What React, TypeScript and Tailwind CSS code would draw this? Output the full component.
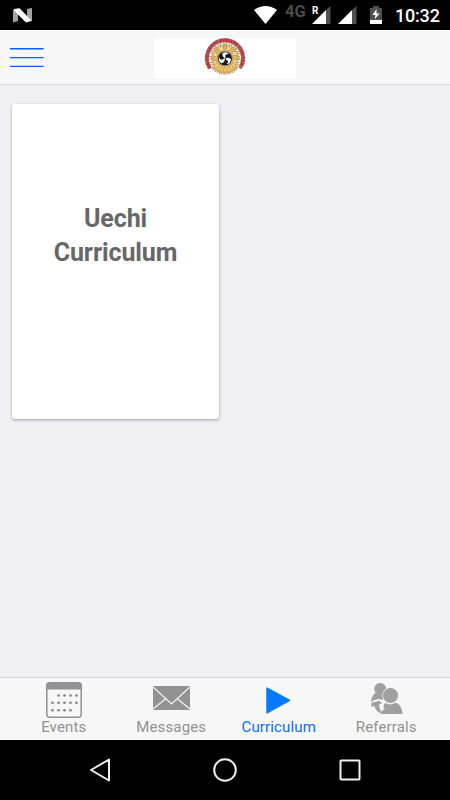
import type { ReactNode } from 'react';
import clsx from 'clsx';

const calendarDots = [
  [13, 13.7], [19, 13.7], [25, 13.7], [31, 13.7],
  [7, 21], [13, 21], [19, 21], [25, 21], [31, 21],
  [7, 28.5], [13, 28.5], [19, 28.5], [25, 28.5],
];

function CalendarIcon() {
  return (
    <svg width="36" height="36" viewBox="0 0 36 36">
      <rect x="0.8" y="0.8" width="34.4" height="34.4" rx="3" fill="none" stroke="#929292" strokeWidth="1.5" />
      <path d="M0.5 7.5V3Q0.5 .5 3 .5H33Q35.5 .5 35.5 3V7.5Z" fill="#929292" />
      {calendarDots.map(([x, y]) => (
        <circle key={`${x}-${y}`} cx={x - 0.5} cy={y - 0.2} r="1.3" fill="#808080" />
      ))}
    </svg>
  );
}

function MailIcon() {
  return (
    <svg className="mb-[3px]" width="37" height="24" viewBox="0 0 37 24">
      <rect width="37" height="24" fill="#929292" />
      <path d="M0 1L18.5 18L37 1M0 23L13 12.5M37 23L24 12.5" fill="none" stroke="#f7f7f7" strokeWidth="1.2" />
    </svg>
  );
}

function PlayIcon() {
  return (
    <svg className="mt-px" width="25" height="27" viewBox="0 0 25 27">
      <path d="M1 1L23.6 13.3L1 26Z" fill="#007aff" stroke="#007aff" strokeWidth="1.4" strokeLinejoin="round" />
    </svg>
  );
}

function PeopleIcon() {
  return (
    <svg className="mb-px" width="33" height="32" viewBox="0 0 33 32" fill="#a0a0a0">
      <circle cx="10.2" cy="6" r="6" />
      <path d="M5 10Q1.5 13.5 .8 19L4.5 17L9 16L13 17V11Z" />
      <path d="M1.5 19.8L9.5 17.8L12 20.5L9.2 21.2Q9 25 12 30.8Q5.5 28.5 4.5 23.3L1.2 23.8Z" />
      <circle cx="20.5" cy="12.5" r="8.3" fill="#f7f7f7" />
      <circle cx="20.5" cy="12.5" r="7.6" />
      <path d="M11 31Q11 23 15.5 20Q20.5 23 25.5 19.5Q32 21.5 32.5 31Z" />
      <path d="M14 20L10 24.5L12.2 25L11 29L14.8 25.5L13.5 24.8Z" fill="#f7f7f7" />
    </svg>
  );
}

const tabs: { label: string; icon: ReactNode; active?: boolean }[] = [
  { label: 'Events', icon: <CalendarIcon /> },
  { label: 'Messages', icon: <MailIcon /> },
  { label: 'Curriculum', icon: <PlayIcon />, active: true },
  { label: 'Referrals', icon: <PeopleIcon /> },
];

function SignalIcon() {
  return (
    <svg width="19" height="18" viewBox="0 0 19 18">
      <path d="M14 4L18.5 0V18H14Z" fill="#505050" />
      <path d="M0 18L14 4V18Z" fill="#fff" />
    </svg>
  );
}

function StatusBar() {
  return (
    <div className="flex h-[30px] shrink-0 items-center bg-black pl-[13px] pr-[9px] text-white">
      <svg width="19" height="15" viewBox="0 0 19 15">
        <path d="M0 2L5 1V13L0 14.5ZM14 1L19 0V13L14 14Z" fill="#a3a3a3" />
        <path d="M1 1L6.5 .2L18.5 12.5L13 14.5L1 2.5Z" fill="#fff" />
      </svg>
      <svg className="ml-auto" width="23" height="18" viewBox="0 0 23 18">
        <path d="M0 4Q11.5 -4 23 4L11.5 18Z" fill="#fff" />
      </svg>
      <span className="ml-2 mb-[7px] w-[22px] text-[16.5px] leading-4 font-bold text-[#4b4b4b]">4G</span>
      <div className="relative ml-[5px] h-[18px]">
        <SignalIcon />
        <span className="absolute top-0 left-0 text-[10px] leading-[10px] font-bold">R</span>
      </div>
      <div className="ml-[7px] h-[18px]">
        <SignalIcon />
      </div>
      <svg className="ml-[13px]" width="12" height="18" viewBox="0 0 12 18">
        <path d="M0 2H3V0H9V2H12V14H0Z" fill="#505050" />
        <path d="M0 14H12V18H0ZM6.5 3L2.5 9H5.5L4.5 13.5L9.5 7.5H6.5Z" fill="#fff" />
      </svg>
      <span className="ml-[13px] w-[46px] whitespace-nowrap pt-px text-[18px] leading-5 font-medium tracking-[-0.2px]">10:32</span>
    </div>
  );
}

const rays = Array.from({ length: 16 }, (_, i) => i * 22.5);
const lowerRays = [-48, -32, -16, 0, 16, 32, 48];

function Emblem() {
  return (
    <svg className="overflow-visible" width="42" height="40" viewBox="-21 -20 42 40">
      <path d="M-15.8 9A18 18 0 1 1 15.8 9" fill="none" stroke="#b5aaa5" strokeWidth="4.4" />
      {rays.map((angle) => (
        <path
          key={angle}
          d="M-2.2 0L-2.5 -12L-1 -15L0 -11.5L1.2 -15.5L2.5 -12L2.2 0Z"
          transform={`rotate(${angle})`}
          fill={angle % 45 === 0 ? '#e6b95a' : '#f7dc98'}
          stroke="#98723f"
          strokeWidth="0.55"
        />
      ))}
      {lowerRays.map((angle) => (
        <path
          key={angle}
          d="M-1.8 6L-2 15L-.8 17L0 13.5L1 16.5L2 14.5L1.8 6Z"
          transform={`rotate(${angle})`}
          fill="#efc873"
          stroke="#a98145"
          strokeWidth="0.5"
        />
      ))}
      <circle r="9.2" cy="0.5" fill="#dcae5c" />
      <circle r="7.4" cy="0.5" fill="#17171a" stroke="#aaa" strokeWidth="1" />
      {[-20, 100, 220].map((angle) => (
        <path key={angle} d="M0 0Q-2.4 -3.2 -.4 -6Q4.6 -6.2 5.2 -2.6Q3 -4.4 1.7 -3Q1.2 -1.5 0 0Z" transform={`translate(0 .5) rotate(${angle})`} fill="#fff" />
      ))}
      <path d="M-14.8 10.2A18 18 0 1 1 14.8 10.2" fill="none" stroke="#8f6b66" strokeWidth="3.4" />
      <path id="arc-text" d="M-13.5 9.6A16.3 16.3 0 1 1 13.5 9.6" fill="none" />
      <text className="font-bold" fontSize="5" fill="#e0141d">
        <textPath href="#arc-text" textLength="67" lengthAdjust="spacingAndGlyphs">DAVID UECHI KARATE CENTER</textPath>
      </text>
    </svg>
  );
}

function Header() {
  return (
    <header className="flex h-[55px] shrink-0 items-center border-t border-b border-t-white border-b-[#dadadd] bg-[#f7f7f7] pl-[10px]">
      <button className="w-[34px]" aria-label="Menu">
        <svg width="34" height="21" viewBox="0 0 34 21" stroke="#0a5cff" strokeWidth="1.4">
          <path d="M0 1.7H33.6M0 10.6H33.6M0 19.4H33.6" />
        </svg>
      </button>
      <div className="ml-[110px] flex h-10 w-[142px] items-center justify-center bg-white">
        <Emblem />
      </div>
    </header>
  );
}

function TabBar() {
  return (
    <nav className="flex h-[63px] shrink-0 border-t border-b border-t-[#d3d3d7] border-b-white bg-[#f7f7f7] px-[10px]">
      {tabs.map((tab) => (
        <a key={tab.label} className={clsx('flex flex-1 flex-col items-center', tab.active ? 'text-[#0a6cff]' : 'text-[#929292]')}>
          <span className="mt-[3px] flex h-[37px] items-center justify-center">{tab.icon}</span>
          <span className="text-[15px] leading-[18px] tracking-[0.14px]">{tab.label}</span>
        </a>
      ))}
    </nav>
  );
}

function SystemNav() {
  return (
    <div className="flex h-[60px] shrink-0 items-center justify-between bg-black pl-[88px] pr-[89px]">
      <svg width="22" height="24" viewBox="0 0 22 24">
        <path d="M3 12L21 1.5V22.5Z" fill="none" stroke="#eee" strokeWidth="2" strokeLinejoin="round" />
      </svg>
      <svg width="24" height="24" viewBox="0 0 24 24">
        <circle cx="12" cy="12" r="10.8" fill="none" stroke="#eee" strokeWidth="2" />
      </svg>
      <svg width="22" height="22" viewBox="0 0 22 22">
        <rect x="1.5" y="1.5" width="19" height="19" rx="0.7" fill="none" stroke="#eee" strokeWidth="2" />
      </svg>
    </div>
  );
}

export default function App() {
  return (
    <div className="flex h-[800px] w-[450px] flex-col overflow-hidden bg-[#efeff4] font-['Roboto',sans-serif]">
      <StatusBar />
      <Header />
      <main className="flex-1 px-3 pt-[19px]">
        <div className="flex h-[315px] w-[207px] justify-center rounded-[3px] bg-white pt-[98px] shadow-[0_1px_3px_rgba(0,0,0,0.35)]">
          <h2 className="w-[150px] text-center text-[25px] leading-[34px] font-bold tracking-[-0.1px] text-[#67676b]">
            Uechi Curriculum
          </h2>
        </div>
      </main>
      <TabBar />
      <SystemNav />
    </div>
  );
}
